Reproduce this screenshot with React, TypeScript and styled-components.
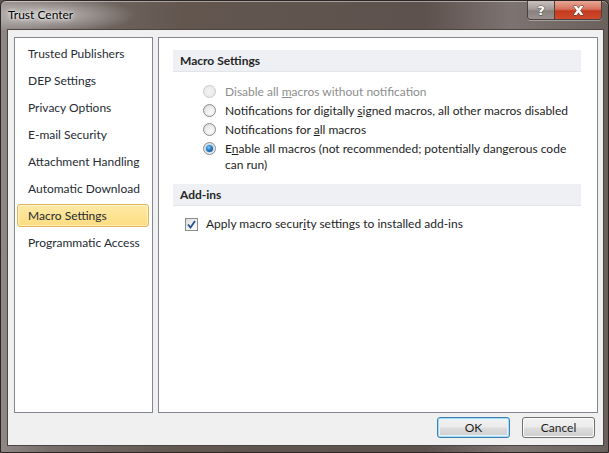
import React from "react"
import styled, { createGlobalStyle } from "styled-components"

const GlobalStyle = createGlobalStyle`
  html, body {
    margin: 0;
    padding: 0;
    background: #5e524e;
  }
  body {
    font-family: "Lato", "Liberation Sans", sans-serif;
    font-size: 12px;
    color: #1e1e1e;
  }
  * { box-sizing: border-box; }
`

const Window = styled.div`
  width: 609px;
  height: 453px;
  display: flex;
  flex-direction: column;
  border: 1px solid #2c2524;
  border-radius: 6px 6px 2px 2px;
  background:
    radial-gradient(ellipse 130px 26px at 45px 14px, rgba(255, 255, 255, 0.55), rgba(255, 255, 255, 0) 70%),
    linear-gradient(90deg, #8f8886 0%, #776d69 8%, #62564f 30%, #5e524e 70%, #7d7370 84%, #6a605c 100%);
  box-shadow: inset 0 1px 0 rgba(255, 255, 255, 0.45);
  overflow: hidden;
`

const TitleBar = styled.div`
  height: 28px;
  display: flex;
  align-items: flex-start;
  justify-content: space-between;
  padding-left: 7px;
`

const Title = styled.div`
  font-size: 12px;
  line-height: 28px;
  color: #000;
  text-shadow: 0 0 6px #fff, 0 0 3px #fff;
`

const Controls = styled.div`
  display: flex;
  margin-right: 6px;
  height: 19px;
  border: 1px solid #4a403e;
  border-top: none;
  border-radius: 0 0 4px 4px;
  overflow: hidden;
  box-shadow: 0 1px 0 rgba(255, 255, 255, 0.35);
`

const ControlButton = styled.div<{ $close?: boolean }>`
  width: ${({ $close }) => ($close ? "47px" : "26px")};
  display: flex;
  align-items: center;
  justify-content: center;
  background: ${({ $close }) =>
    $close
      ? "linear-gradient(180deg, #e8a898 0%, #d6725c 45%, #c43a1f 55%, #d04a2c 100%)"
      : "linear-gradient(180deg, #c7c1bf 0%, #a39c99 45%, #8a817e 55%, #9b928f 100%)"};
  border-left: ${({ $close }) => ($close ? "1px solid #4a403e" : "none")};
  color: #fff;
  font-family: "DejaVu Sans", sans-serif;
  font-weight: bold;
  font-size: 13px;
  -webkit-text-stroke: 0.8px #3a3a3a;
  paint-order: stroke fill;
`

const Client = styled.div`
  flex: 1;
  margin: 0 4px 6px 6px;
  border: 1px solid #4b4442;
  background: #f0f0f0;
  display: flex;
  flex-direction: column;
  padding: 7px 5px 7px 6px;
  gap: 4px;
`

const Body = styled.div`
  flex: 1;
  display: flex;
  gap: 5px;
`

const Nav = styled.div`
  width: 139px;
  background: #fff;
  border: 1px solid #828790;
  display: flex;
  flex-direction: column;
  gap: 4px;
  padding: 4px 3px 4px 2px;
`

const NavItem = styled.div<{ $active?: boolean }>`
  height: 23px;
  line-height: 21px;
  padding-left: 10px;
  color: #262b33;
  border: 1px solid ${({ $active }) => ($active ? "#e2b45a" : "transparent")};
  border-radius: 3px;
  background: ${({ $active }) =>
    $active ? "linear-gradient(180deg, #fdeaa8 0%, #fde393 50%, #fddc82 100%)" : "transparent"};
  box-shadow: ${({ $active }) => ($active ? "inset 0 0 0 1px rgba(255, 250, 225, 0.6)" : "none")};
`

const Content = styled.div`
  flex: 1;
  background: #fff;
  border: 1px solid #828790;
  padding: 12px 16px 0 14px;
`

const SectionHeader = styled.div`
  height: 22px;
  line-height: 21px;
  padding-left: 7px;
  font-weight: bold;
  color: #262626;
  background: #eef0f3;
  border-bottom: 1px solid #e2e5ea;
`

const RadioGroup = styled.div`
  display: flex;
  flex-direction: column;
  gap: 3px;
  margin: 12px 0 11px 30px;
`

const OptionRow = styled.label<{ $disabled?: boolean }>`
  display: flex;
  align-items: flex-start;
  gap: 9px;
  line-height: 16px;
  color: ${({ $disabled }) => ($disabled ? "#8d8d8d" : "#1e1e1e")};
`

const OptionText = styled.span`
  width: 345px;
`

const Radio = styled.span<{ $checked?: boolean; $disabled?: boolean }>`
  flex: none;
  width: 13px;
  height: 13px;
  margin-top: 1px;
  border-radius: 50%;
  border: 1px solid ${({ $disabled }) => ($disabled ? "#c9c9c9" : "#8a8c8e")};
  background: ${({ $disabled }) =>
    $disabled
      ? "radial-gradient(circle at 50% 50%, #f4f4f4 0%, #e6e6e6 100%)"
      : "radial-gradient(circle at 60% 65%, #fdfdfd 0%, #e8e8e8 55%, #d2d2d2 100%)"};
  display: flex;
  align-items: center;
  justify-content: center;

  &::after {
    content: "";
    display: ${({ $checked }) => ($checked ? "block" : "none")};
    width: 7px;
    height: 7px;
    border-radius: 50%;
    background: radial-gradient(circle at 40% 35%, #7fc6f5 0%, #2b7ac4 45%, #0d3a6e 100%);
    box-shadow: 0 0 0 1px #b9dcf3;
  }
`

const CheckRow = styled.label`
  display: flex;
  align-items: center;
  gap: 8px;
  line-height: 16px;
  margin: 10px 0 0 12px;
`

const CheckBox = styled.span`
  flex: none;
  width: 13px;
  height: 13px;
  border: 1px solid #8a8c8e;
  background: linear-gradient(135deg, #dcdcdc 0%, #f3f3f3 60%, #fbfbfb 100%);
  display: flex;
  align-items: center;
  justify-content: center;
`

const Footer = styled.div`
  display: flex;
  justify-content: flex-end;
  gap: 12px;
  padding-right: 3px;
`

const Button = styled.button<{ $default?: boolean }>`
  width: 73px;
  height: 21px;
  padding: 0;
  font-family: inherit;
  font-size: 12px;
  color: #1e1e1e;
  border-radius: 3px;
  border: 1px solid ${({ $default }) => ($default ? "#3c7fb1" : "#707070")};
  background: linear-gradient(180deg, #f2f2f2 0%, #ebebeb 48%, #dddddd 52%, #cfcfcf 100%);
  box-shadow: ${({ $default }) =>
    $default ? "inset 0 0 0 1px #a8dcf5, inset 0 0 0 2px #e4f4fc" : "inset 0 0 0 1px #fcfcfc"};
`

const navItems = [
  "Trusted Publishers",
  "DEP Settings",
  "Privacy Options",
  "E-mail Security",
  "Attachment Handling",
  "Automatic Download",
  "Macro Settings",
  "Programmatic Access",
]

const macroOptions: { label: React.ReactNode; disabled?: boolean; checked?: boolean }[] = [
  { label: <>Disable all <u>m</u>acros without notification</>, disabled: true },
  { label: <>Notifications for digitally <u>s</u>igned macros, all other macros disabled</> },
  { label: <>Notifications for <u>a</u>ll macros</> },
  {
    label: <>E<u>n</u>able all macros (not recommended; potentially dangerous code can run)</>,
    checked: true,
  },
]

export default function App() {
  return (
    <>
      <GlobalStyle />
      <Window>
        <TitleBar>
          <Title>Trust Center</Title>
          <Controls>
            <ControlButton>?</ControlButton>
            <ControlButton $close>
              <svg width="13" height="11" viewBox="0 0 13 11">
                <path
                  d="M1.5 1 H4.5 L6.5 3.6 L8.5 1 H11.5 L8.2 5.5 L11.5 10 H8.5 L6.5 7.4 L4.5 10 H1.5 L4.8 5.5 Z"
                  fill="#fff"
                  stroke="#3a3a3a"
                  strokeWidth="0.9"
                  strokeLinejoin="round"
                />
              </svg>
            </ControlButton>
          </Controls>
        </TitleBar>
        <Client>
          <Body>
            <Nav>
              {navItems.map((item, i) => (
                <NavItem key={item} $active={i === 6}>
                  {item}
                </NavItem>
              ))}
            </Nav>
            <Content>
              <SectionHeader>Macro Settings</SectionHeader>
              <RadioGroup>
                {macroOptions.map((opt, i) => (
                  <OptionRow key={i} $disabled={opt.disabled}>
                    <Radio $checked={opt.checked} $disabled={opt.disabled} />
                    <OptionText>{opt.label}</OptionText>
                  </OptionRow>
                ))}
              </RadioGroup>
              <SectionHeader>Add-ins</SectionHeader>
              <CheckRow>
                <CheckBox>
                  <svg width="9" height="9" viewBox="0 0 9 9">
                    <path d="M1 4.5 L3.5 7.5 L8 1" fill="none" stroke="#2a4f8f" strokeWidth="1.8" />
                  </svg>
                </CheckBox>
                <span>
                  Apply macro secur<u>i</u>ty settings to installed add-ins
                </span>
              </CheckRow>
            </Content>
          </Body>
          <Footer>
            <Button $default>OK</Button>
            <Button>Cancel</Button>
          </Footer>
        </Client>
      </Window>
    </>
  )
}
